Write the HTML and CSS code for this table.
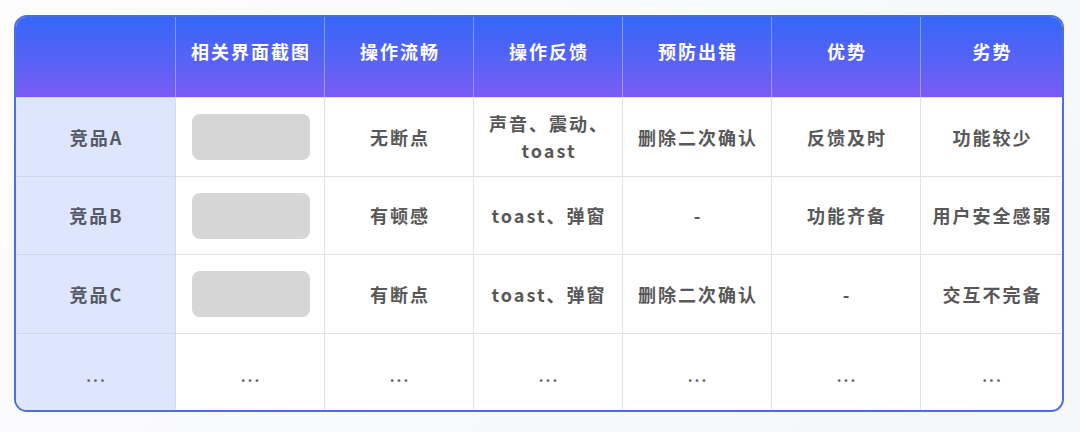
FILE: index.html
```html
<!DOCTYPE html>
<html lang="zh">
<head>
<meta charset="utf-8">
<link rel="stylesheet" href="styles.css">
</head>
<body>
<div class="page">
  <div class="table">
    <div class="hcell corner"></div>
    <div class="hcell">相关界面截图</div>
    <div class="hcell">操作流畅</div>
    <div class="hcell">操作反馈</div>
    <div class="hcell">预防出错</div>
    <div class="hcell">优势</div>
    <div class="hcell last">劣势</div>

    <div class="rcell">竞品A</div>
    <div class="cell"><div class="shot"></div></div>
    <div class="cell">无断点</div>
    <div class="cell">声音、震动、<br>toast</div>
    <div class="cell">删除二次确认</div>
    <div class="cell">反馈及时</div>
    <div class="cell last">功能较少</div>

    <div class="rcell">竞品B</div>
    <div class="cell"><div class="shot"></div></div>
    <div class="cell">有顿感</div>
    <div class="cell">toast、弹窗</div>
    <div class="cell">-</div>
    <div class="cell">功能齐备</div>
    <div class="cell last">用户安全感弱</div>

    <div class="rcell">竞品C</div>
    <div class="cell"><div class="shot"></div></div>
    <div class="cell">有断点</div>
    <div class="cell">toast、弹窗</div>
    <div class="cell">删除二次确认</div>
    <div class="cell">-</div>
    <div class="cell last">交互不完备</div>

    <div class="rcell bottom dots">...</div>
    <div class="cell bottom dots">...</div>
    <div class="cell bottom dots">...</div>
    <div class="cell bottom dots">...</div>
    <div class="cell bottom dots">...</div>
    <div class="cell bottom dots">...</div>
    <div class="cell bottom last dots">...</div>
  </div>
</div>
</body>
</html>
```
FILE: styles.css
```css
html, body {
  margin: 0;
  padding: 0;
}
body {
  width: 1080px;
  height: 432px;
  background: linear-gradient(135deg, #fdfdfe 0%, #f4f6fa 100%);
  font-family: "Noto Sans CJK SC", "Noto Sans", sans-serif;
  overflow: hidden;
}
.page {
  padding: 15px 0 0 14px;
}
.table {
  width: 1046px;
  border: 2px solid #4d6fdc;
  border-radius: 13px;
  overflow: hidden;
  display: grid;
  grid-template-columns: 160px 149px 149px 149px 149px 149px 141px;
  grid-template-rows: 80px 79px 78px 79px 77px;
  background: #ffffff;
}
.hcell {
  background: linear-gradient(180deg, #3567f8 0%, #5862f6 55%, #7b5bf4 100%);
  color: #ffffff;
  font-weight: 700;
  font-size: 18px;
  letter-spacing: 2px;
  display: flex;
  align-items: center;
  justify-content: center;
  padding-bottom: 12px;
  padding-left: 2px;
  box-sizing: border-box;
  border-right: 1px solid rgba(255, 255, 255, 0.35);
}
.hcell.last, .cell.last {
  border-right: none;
}
.cell, .rcell {
  display: flex;
  align-items: center;
  justify-content: center;
  text-align: center;
  color: #585858;
  font-weight: 700;
  font-size: 18px;
  line-height: 27px;
  letter-spacing: 2px;
  padding-left: 2px;
  border-right: 1px solid #e2e2e2;
  border-top: 1px solid #e2e2e2;
  box-sizing: border-box;
}
.rcell {
  background: #dee6fd;
  border-right: 1px solid #d3daf0;
  border-top: 1px solid #cfd7ee;
  color: #555a66;
}
.dots {
  font-size: 15px;
  color: #666;
  letter-spacing: 2px;
  padding-top: 6px;
}
.shot {
  width: 118px;
  height: 46px;
  border-radius: 8px;
  background: #d6d6d6;
}
```
